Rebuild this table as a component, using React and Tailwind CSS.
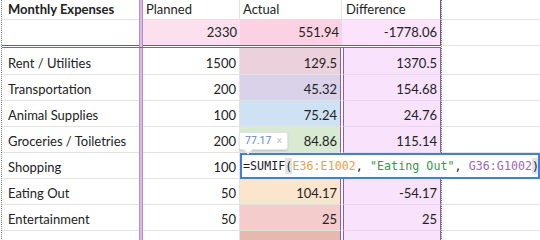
const grid = "border-[#e2e2e2]";

const lowerRows = [
  { label: "Rent / Utilities", planned: "1500", actual: "129.5", diff: "1370.5", bg: "bg-[#ead1dc]" },
  { label: "Transportation", planned: "200", actual: "45.32", diff: "154.68", bg: "bg-[#d9d2e9]" },
  { label: "Animal Supplies", planned: "100", actual: "75.24", diff: "24.76", bg: "bg-[#cfe2f3]" },
  { label: "Groceries / Toiletries", planned: "200", actual: "84.86", diff: "115.14", bg: "bg-[#d9ead3]", tip: true },
  { label: "Shopping", planned: "100", actual: "", diff: "", bg: "bg-white", editing: true },
  { label: "Eating Out", planned: "50", actual: "104.17", diff: "-54.17", bg: "bg-[#fce5cd]" },
  { label: "Entertainment", planned: "50", actual: "25", diff: "25", bg: "bg-[#f4cccc]" },
  { label: "", planned: "", actual: "", diff: "", bg: "bg-[#e6b8af]" },
];

function Strip() {
  return <div className="w-[4px] shrink-0 border-x border-[#b48fcd] bg-[#d7bce6]" />;
}

function FormulaEditor() {
  return (
    <div className="absolute left-0 top-0 z-10 flex h-[26px] w-[300px] items-center overflow-hidden whitespace-pre border-2 border-[#3f7fe3] bg-white pl-px font-['DejaVu_Sans_Mono',monospace] text-[11.6px] tracking-[0.07px] text-[#202124]">
      <span>=SUMIF</span>
      <span className="bg-[#e3e3e3]">(</span>
      <span className="text-[#f29d3f]">E36:E1002</span>
      <span>, </span>
      <span className="text-[#2f9a4e]">"Eating Out"</span>
      <span>, </span>
      <span className="text-[#9c68b5]">G36:G1002</span>
      <span className="bg-[#e3e3e3]">)</span>
      <span className="h-[15px] w-px shrink-0 bg-[#202124]" />
    </div>
  );
}

function Tooltip() {
  return (
    <div className="absolute -left-px top-[5px] z-20 flex h-[18px] items-center gap-[5px] rounded-[2px] border border-[#e4e4e4] bg-white px-[5px] font-['Roboto',sans-serif] text-[10.5px] shadow-[0_1px_2px_rgba(0,0,0,0.15)]">
      <span className="text-[#5f86d6]">77.17</span>
      <span className="text-[#c2c2c2]">×</span>
      <div className="absolute -bottom-[4px] left-[5px] h-[6px] w-[6px] rotate-45 border-b border-r border-[#e4e4e4] bg-white" />
    </div>
  );
}

function LowerRow({ row, first }) {
  return (
    <div className={`flex shrink-0 ${first ? "h-[27px]" : "h-[26px]"}`}>
      <div className={`flex w-[137px] shrink-0 items-end border-b ${grid} pb-[3px] pl-[6px]`}>{row.label}</div>
      <Strip />
      <div className={`flex w-[97px] shrink-0 items-end justify-end border-b border-r ${grid} pb-[3px] pr-[3px]`}>{row.planned}</div>
      <div className={`relative flex w-[101px] shrink-0 items-end justify-end border-b border-r border-b-[#e2e2e2] border-r-[#8d5bb5] pb-[3px] pr-[3px] ${row.bg}`}>
        {row.actual}
        {row.tip && <Tooltip />}
        {row.editing && <FormulaEditor />}
      </div>
      <div className="w-[2px] shrink-0" />
      <div className="flex w-[98px] shrink-0 items-end justify-end border-x border-b border-x-[#8d5bb5] border-b-[#eed6f1] bg-[#f9e3fc] pb-[3px] pr-[3px]">{row.diff}</div>
    </div>
  );
}

export default function App() {
  return (
    <div className="flex h-[240px] w-[540px] items-start overflow-hidden bg-white font-['Lato','Liberation_Sans',sans-serif] text-[13px] leading-4 text-[#222]">
      <div className="ml-px flex w-[441px] shrink-0 flex-col border-x border-dotted border-[#7a7a7a]">
        {/* header */}
        <div className="flex h-[20px] shrink-0">
          <div className={`flex w-[137px] shrink-0 items-end border-b ${grid} pb-[2px] pl-[6px] font-bold`}>Monthly Expenses</div>
          <Strip />
          <div className={`flex w-[97px] shrink-0 items-end border-b border-r ${grid} pb-[2px] pl-[3px]`}>Planned</div>
          <div className={`flex w-[102px] shrink-0 items-end border-b border-r ${grid} pb-[2px] pl-[3px]`}>Actual</div>
          <div className="flex w-[99px] shrink-0 items-end border-b border-r border-b-[#e2e2e2] border-r-[#7c4f9e] pb-[2px] pl-[4px]">Difference</div>
        </div>
        {/* totals */}
        <div className="flex h-[26px] shrink-0">
          <div className="w-[137px] shrink-0 border-b border-[#7c4f9e]" />
          <Strip />
          <div className="flex w-[97px] shrink-0 items-end justify-end border-b border-[#7c4f9e] bg-[#fde0ee] pb-[5px] pr-[3px]">2330</div>
          <div className="flex w-[102px] shrink-0 items-end justify-end border-b border-[#7c4f9e] bg-[#fcd2e2] pb-[5px] pr-[3px]">551.94</div>
          <div className="flex w-[99px] shrink-0 items-end justify-end border-b border-r border-[#7c4f9e] bg-[#fae3fb] pb-[5px] pr-[3px]">-1778.06</div>
        </div>
        <div className="flex h-[1px] shrink-0">
          <div className="w-[137px] shrink-0" />
          <Strip />
        </div>
        <div className="shrink-0 border-t border-[#8d5bb5]">
          {lowerRows.map((row, i) => (
            <LowerRow key={i} row={row} first={i === 0} />
          ))}
        </div>
      </div>
      {/* empty column */}
      <div className="flex flex-1 flex-col">
        <div className={`h-[20px] shrink-0 border-b ${grid}`} />
        <div className={`h-[26px] shrink-0 border-b ${grid}`} />
        <div className="h-[1px] shrink-0" />
        <div className={`h-[28px] shrink-0 border-b ${grid}`} />
        {lowerRows.slice(1).map((_, i) => (
          <div key={i} className={`h-[26px] shrink-0 border-b ${grid}`} />
        ))}
      </div>
    </div>
  );
}
